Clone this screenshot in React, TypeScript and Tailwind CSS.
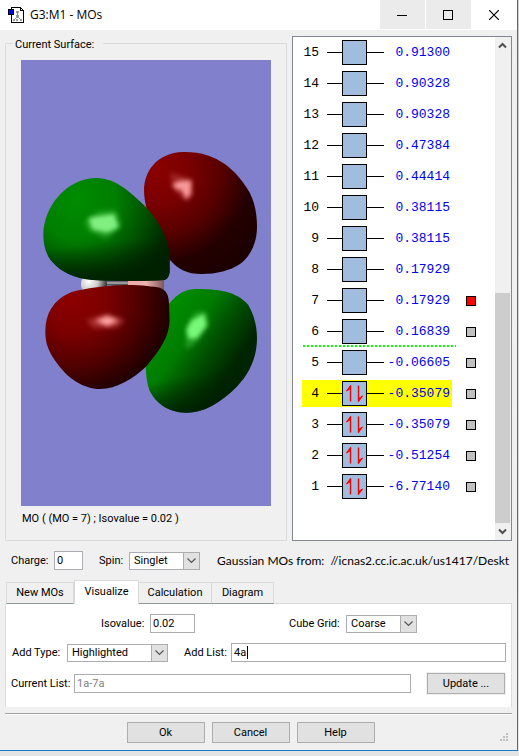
import { useState } from 'react';
import type { ReactNode } from 'react';

type Orbital = {
  id: number;
  energy: string;
  occupied?: boolean;
  selectable?: boolean;
};

const ORBITALS: Orbital[] = [
  { id: 15, energy: '0.91300' },
  { id: 14, energy: '0.90328' },
  { id: 13, energy: '0.90328' },
  { id: 12, energy: '0.47384' },
  { id: 11, energy: '0.44414' },
  { id: 10, energy: '0.38115' },
  { id: 9, energy: '0.38115' },
  { id: 8, energy: '0.17929' },
  { id: 7, energy: '0.17929', selectable: true },
  { id: 6, energy: '0.16839', selectable: true },
  { id: 5, energy: '-0.06605', selectable: true },
  { id: 4, energy: '-0.35079', occupied: true, selectable: true },
  { id: 3, energy: '-0.35079', occupied: true, selectable: true },
  { id: 2, energy: '-0.51254', occupied: true, selectable: true },
  { id: 1, energy: '-6.77140', occupied: true, selectable: true },
];

const TABS = [
  { name: 'New MOs', width: 'w-[68px]' },
  { name: 'Visualize', width: 'w-[65px]' },
  { name: 'Calculation', width: 'w-[73px]' },
  { name: 'Diagram', width: 'w-[62px]' },
];

const inputClass = 'border border-[#abadb3] bg-white px-[2px] outline-none';

function AppIcon() {
  return (
    <svg width="16" height="16" viewBox="0 0 16 16" shapeRendering="crispEdges">
      <path d="M3.5.5h9l3 3v12h-12z" fill="#fff" stroke="#000" />
      <path d="M12.500 .5v3h3" fill="none" stroke="#000" />
      <path d="M9.500 5v5M9 10l-3 3M10 10l3 3" stroke="#888" strokeWidth="1" shapeRendering="auto" />
      <path d="M8 4h3v2H8zM8 8h3v3H8zM5 12h2v2H5zM8 12h2v2H8zM12 12h2v2h-2z" fill="#999" />
      <path d="M.5 2.500h5v5h-5z" fill="#00f" stroke="#000" />
    </svg>
  );
}

function TitleBar() {
  return (
    <header className="flex h-[30px] bg-white">
      <div className="flex flex-1 items-center gap-[6px] pl-2 font-['Open_Sans',sans-serif] text-xs">
        <AppIcon />
        <h1>G3:M1 - MOs</h1>
      </div>
      <div className="flex h-[29px] gap-px">
        <button aria-label="Minimize" className="flex w-[45px] items-center justify-center bg-[#ebebeb] pr-px">
          <svg width="10" height="10" shapeRendering="crispEdges">
            <path d="M0 5.500h10" stroke="#000" />
          </svg>
        </button>
        <button aria-label="Maximize" className="flex w-[45px] items-center justify-center bg-[#ebebeb] pr-px">
          <svg width="10" height="10" shapeRendering="crispEdges">
            <path d="M.5.5h9v9h-9z" fill="none" stroke="#000" />
          </svg>
        </button>
        <button aria-label="Close" className="flex w-[45px] items-center justify-center pr-px">
          <svg width="10" height="10">
            <path d="M0 0l10 10M10 0L0 10" stroke="#000" strokeWidth="1.200" />
          </svg>
        </button>
      </div>
    </header>
  );
}

function SurfaceView() {
  return (
    <svg viewBox="0 0 250 446" className="h-auto w-full bg-[#8080cc]" role="img" aria-label="Molecular orbital surface">
      <defs>
        <radialGradient id="redTop" gradientUnits="userSpaceOnUse" cx="410" cy="90" r="360">
          <stop offset="0" stopColor="#8c0000" />
          <stop offset=".3" stopColor="#780000" />
          <stop offset=".55" stopColor="#560000" />
          <stop offset=".78" stopColor="#240000" />
          <stop offset="1" stopColor="#1c0000" />
        </radialGradient>
        <radialGradient id="greenTop" gradientUnits="userSpaceOnUse" cx="170" cy="180" r="340">
          <stop offset="0" stopColor="#008c00" />
          <stop offset=".35" stopColor="#007e00" />
          <stop offset=".6" stopColor="#005400" />
          <stop offset=".86" stopColor="#002400" />
          <stop offset="1" stopColor="#002000" />
        </radialGradient>
        <linearGradient id="greenFloor" gradientUnits="userSpaceOnUse" x1="240" y1="310" x2="250" y2="410">
          <stop offset="0" stopColor="#002000" stopOpacity="0" />
          <stop offset="1" stopColor="#002000" stopOpacity=".9" />
        </linearGradient>
        <radialGradient id="redLow" gradientUnits="userSpaceOnUse" cx="160" cy="90" r="330">
          <stop offset="0" stopColor="#8c0000" />
          <stop offset=".3" stopColor="#7c0000" />
          <stop offset=".6" stopColor="#500000" />
          <stop offset=".85" stopColor="#240000" />
          <stop offset="1" stopColor="#200000" />
        </radialGradient>
        <linearGradient id="greenLow" gradientUnits="userSpaceOnUse" x1="430" y1="150" x2="640" y2="290">
          <stop offset="0" stopColor="#008c00" />
          <stop offset=".35" stopColor="#007c00" />
          <stop offset=".65" stopColor="#005000" />
          <stop offset="1" stopColor="#002400" />
        </linearGradient>
        <linearGradient id="greenLowFloor" gradientUnits="userSpaceOnUse" x1="480" y1="320" x2="500" y2="420">
          <stop offset="0" stopColor="#002000" stopOpacity="0" />
          <stop offset="1" stopColor="#002000" stopOpacity=".85" />
        </linearGradient>
        <radialGradient id="hydrogen" cx=".3" cy=".4" r=".7">
          <stop offset="0" stopColor="#fff" />
          <stop offset=".5" stopColor="#ccc" />
          <stop offset="1" stopColor="#333" />
        </radialGradient>
        <linearGradient id="boron">
          <stop offset="0" stopColor="#f0a8a8" />
          <stop offset=".5" stopColor="#eeb0b0" />
          <stop offset="1" stopColor="#7c5858" />
        </linearGradient>
        <filter id="soft" x="-40%" y="-40%" width="180%" height="180%">
          <feGaussianBlur stdDeviation="8" />
        </filter>
        <filter id="softer" x="-40%" y="-40%" width="180%" height="180%">
          <feGaussianBlur stdDeviation="7" />
        </filter>
      </defs>

      {/* right-hand lobes */}
      <g transform="translate(-1 80) scale(.33333)">
        <path
          d="M372 150C372 95 410 38 490 36C590 34 650 90 690 160C705 190 711 225 711 260C711 310 690 350 660 372C630 392 590 402 545 402C500 402 475 388 450 360C420 320 372 220 372 150Z"
          fill="url(#redTop)"
        />
        <path d="M450 98L512 116L518 165L500 184L462 150Z" fill="#b84040" opacity=".6" filter="url(#soft)" />
        <path d="M458 132L480 122L514 122L512 162L498 178L486 152L464 144Z" fill="#f89898" filter="url(#softer)" />
      </g>
      <g transform="translate(-1 210) scale(.33333)">
        <path
          d="M430 125C470 65 500 57 530 57C600 57 650 65 685 105C705 140 711 175 711 205C711 260 690 310 650 350C600 400 550 428 500 428C440 428 405 395 388 360C380 335 377 310 378 290Z"
          fill="url(#greenLow)"
        />
        <path
          d="M430 125C470 65 500 57 530 57C600 57 650 65 685 105C705 140 711 175 711 205C711 260 690 310 650 350C600 400 550 428 500 428C440 428 405 395 388 360C380 335 377 310 378 290Z"
          fill="url(#greenLowFloor)"
        />
        <path d="M498 170L525 125L558 125L566 165L530 215L498 240Z" fill="#30b030" opacity=".7" filter="url(#soft)" />
        <path d="M500 178L516 150L552 132L560 166L530 205L506 206Z" fill="#78f878" filter="url(#softer)" />
      </g>

      {/* atoms and bond */}
      <g transform="translate(-1 80) scale(.33333)">
        <rect x="250" y="424" width="80" height="12" fill="#555" />
        <rect x="250" y="427" width="80" height="4" fill="#bbb" />
        <circle cx="222" cy="432" r="39" fill="url(#hydrogen)" />
        <rect x="324" y="410" width="108" height="40" fill="url(#boron)" />
      </g>

      {/* left-hand lobes */}
      <g transform="translate(-1 80) scale(.33333)">
        <path
          d="M70 285C70 200 140 114 230 114C290 114 340 165 380 203C420 248 448 300 449 350L449 395C447 410 443 414 435 420C350 425 290 423 220 420C150 416 110 385 88 355C74 330 70 305 70 285Z"
          fill="url(#greenTop)"
        />
        <path
          d="M70 285C70 200 140 114 230 114C290 114 340 165 380 203C420 248 448 300 449 350L449 395C447 410 443 414 435 420C350 425 290 423 220 420C150 416 110 385 88 355C74 330 70 305 70 285Z"
          fill="url(#greenFloor)"
        />
        <path d="M192 245L235 212L290 210L304 258L260 298L205 272Z" fill="#30b030" opacity=".6" filter="url(#soft)" />
        <path d="M206 234L240 228L282 222L296 262L262 278L216 268Z" fill="#80f080" filter="url(#softer)" />
      </g>
      <g transform="translate(-1 210) scale(.33333)">
        <path
          d="M76 185C76 130 100 90 150 68C190 55 270 45 320 45C370 45 400 50 420 53C440 62 446 75 447 100L449 150C448 200 420 240 378 290C340 325 290 357 240 357C190 357 145 325 115 285C85 245 76 220 76 185Z"
          fill="url(#redLow)"
        />
        <path d="M200 150L260 130L315 150L290 174L220 174Z" fill="#b84040" opacity=".7" filter="url(#soft)" />
        <path d="M226 152L262 138L296 152L262 168Z" fill="#ffa0a0" filter="url(#softer)" />
      </g>
    </svg>
  );
}

function OrbitalRow({
  orbital,
  highlighted,
  checked,
  onToggle,
}: {
  orbital: Orbital;
  highlighted: boolean;
  checked: boolean;
  onToggle: () => void;
}) {
  return (
    <li className="flex h-[31px] items-center">
      <div className={`flex h-[27px] w-[150px] items-center ${highlighted ? 'bg-[#ffff00]' : ''}`}>
        <span className="w-[17px] text-right">{orbital.id}</span>
        <span className="ml-2 h-px w-[15px] bg-black" />
        <span className="flex size-[25px] items-center justify-center border border-black bg-[#a0bddd]">
          {orbital.occupied && (
            <svg width="19" height="19" viewBox="0 0 19 19" stroke="#f00" fill="#f00">
              <path d="M5.500 1.500v16M13.500 1.500v16" strokeWidth="1.400" />
              <path d="M5.500 1.500v3L1.500 7zM13.500 17.500v-3L17.500 12z" />
            </svg>
          )}
        </span>
        <span className="h-px w-[17px] bg-black" />
        <span className="flex-1 pr-[2px] text-right text-[#0000f0]">{orbital.energy}</span>
      </div>
      {orbital.selectable && (
        <input
          type="checkbox"
          aria-label={`Surface for MO ${orbital.id}`}
          checked={checked}
          onChange={onToggle}
          className="ml-[14px] size-[10px] appearance-none border border-black bg-[#c0c0c0] checked:bg-[#ff0000]"
        />
      )}
    </li>
  );
}

function ScrollBar() {
  return (
    <div className="flex w-[16px] flex-col bg-[#f0f0f0] pr-px">
      <button aria-label="Scroll up" className="flex h-[17px] items-center justify-center">
        <svg width="9" height="7" fill="none" stroke="#505050" strokeWidth="2">
          <path d="M1 5.500l3.500-3.500L8 5.500" />
        </svg>
      </button>
      <div className="flex flex-1 flex-col justify-end">
        <div className="h-[49%] bg-[#cdcdcd]" />
      </div>
      <button aria-label="Scroll down" className="flex h-[17px] items-center justify-center">
        <svg width="9" height="7" fill="none" stroke="#505050" strokeWidth="2">
          <path d="M1 1.500l3.500 3.500L8 1.500" />
        </svg>
      </button>
    </div>
  );
}

function OrbitalList() {
  const [shown, setShown] = useState<number[]>([7]);

  const toggle = (id: number) => {
    setShown((prev) => (prev.includes(id) ? prev.filter((n) => n !== id) : [...prev, id]));
  };

  return (
    <section className="flex w-[220px] shrink-0 border border-[#828790] bg-white">
      <div className="relative flex-1 pl-[9px] font-['Liberation_Mono',monospace] text-[13px] leading-4">
        <ul>
          {ORBITALS.map((orbital) => (
            <OrbitalRow
              key={orbital.id}
              orbital={orbital}
              highlighted={orbital.id === 4}
              checked={shown.includes(orbital.id)}
              onToggle={() => toggle(orbital.id)}
            />
          ))}
        </ul>
        {/* HOMO / LUMO divider */}
        <div className="absolute top-[308px] left-[10px] h-[2px] w-[153px] bg-[repeating-linear-gradient(90deg,#00ff00_0_2px,transparent_2px_4px)]" />
      </div>
      <ScrollBar />
    </section>
  );
}

function Select({ id, options, className }: { id: string; options: string[]; className: string }) {
  return (
    <div className={`relative h-[18px] ${className}`}>
      <select id={id} className="block h-full w-full appearance-none border border-[#abadb3] bg-white pr-4 pl-1 outline-none">
        {options.map((option) => (
          <option key={option}>{option}</option>
        ))}
      </select>
      <span className="pointer-events-none absolute inset-y-0 right-0 flex w-[17px] items-center justify-center border border-[#adadad] bg-[#e1e1e1]">
        <svg width="9" height="6" fill="none" stroke="#555">
          <path d="M.5.5l4 4 4-4" strokeWidth="1.200" />
        </svg>
      </span>
    </div>
  );
}

function PushButton({ children }: { children: ReactNode }) {
  return (
    <button className="h-[21px] w-[78px] border border-[#adadad] bg-[#e1e1e1]">{children}</button>
  );
}

function Tabs({ active, onSelect }: { active: string; onSelect: (tab: string) => void }) {
  return (
    <div role="tablist" className="flex items-end pl-px">
      {TABS.map(({ name, width }) => (
        <button
          key={name}
          role="tab"
          aria-selected={name === active}
          onClick={() => onSelect(name)}
          className={`${width} ${
            name === active
              ? 'h-6 border border-b-0 border-[#d9d9d9] bg-white pb-[2px]'
              : 'h-[22px] border border-l-0 border-[#d9d9d9] border-b-[#8e9999] first:border-l'
          }`}
        >
          {name}
        </button>
      ))}
      <div className="flex-1 border-b border-[#d9d9d9]" />
    </div>
  );
}

function VisualizePanel() {
  return (
    <div className="flex flex-col gap-[10px] border-x border-[#dcdcdc] bg-white pt-[10px] pr-[5px] pb-[12px] pl-[5px]">
      <div className="flex items-center pl-[90px]">
        <label htmlFor="isovalue" className="w-[49px]">Isovalue:</label>
        <input id="isovalue" defaultValue="0.02" className={`${inputClass} h-[19px] w-[45px]`} />
        <label htmlFor="grid" className="ml-[94px] w-[57px]">Cube Grid:</label>
        <Select id="grid" options={['Coarse', 'Medium', 'Fine']} className="w-[71px]" />
      </div>
      <div className="flex items-center">
        <label htmlFor="add-type" className="w-[56px] pl-px">Add Type:</label>
        <Select id="add-type" options={['Highlighted', 'HOMO', 'LUMO']} className="w-[101px]" />
        <label htmlFor="add-list" className="ml-4 w-[47px]">Add List:</label>
        <div className={`${inputClass} relative h-[19px] flex-1`}>
          <input id="add-list" defaultValue="4a" className="block h-full w-full outline-none" />
          <span className="absolute top-[2px] left-[15px] h-[13px] w-px bg-black" />
        </div>
      </div>
      <div className="flex items-center">
        <label htmlFor="current-list" className="w-[63px]">Current List:</label>
        <input
          id="current-list"
          readOnly
          value="1a-7a"
          className={`${inputClass} mr-[15px] h-[19px] min-w-0 flex-1 text-[#808080]`}
        />
        <div className="border border-[#f0f0f0]">
          <PushButton>Update ...</PushButton>
        </div>
      </div>
    </div>
  );
}

export default function App() {
  const [tab, setTab] = useState('Visualize');

  return (
    <div className="min-h-screen bg-[linear-gradient(#c8c8c8,#e4e4e4)] pr-px pb-[5px] font-['Roboto',sans-serif] text-[11px] leading-4 text-black">
      <div className="border-r border-b border-[#1a7bcb] bg-[#f0f0f0]">
        <TitleBar />
        <main className="px-[5px]">
          <div className="flex gap-[5px] pt-[6px]">
            <fieldset className="min-w-0 flex-1 border border-[#dcdcdc] px-[15px]">
              <legend className="-ml-[8px] h-[14px] pr-[9px] pl-[2px] leading-[18px]">Current Surface:</legend>
              <div className="pt-[10px] pb-[13px]">
                <SurfaceView />
                <p className="pt-[5px] pl-px">MO ( (MO = 7) ; Isovalue = 0.02 )</p>
              </div>
            </fieldset>
            <OrbitalList />
          </div>

          <div className="flex h-[39px] items-center pl-[6px]">
            <label htmlFor="charge" className="w-[43px]">Charge:</label>
            <input id="charge" defaultValue="0" className={`${inputClass} h-[19px] w-[29px]`} />
            <label htmlFor="spin" className="ml-4 w-[30px]">Spin:</label>
            <Select id="spin" options={['Singlet', 'Triplet']} className="w-[71px]" />
            <p className="ml-[17px] min-w-0 flex-1 overflow-hidden font-['Lato',sans-serif] text-xs whitespace-pre">
              {'Gaussian MOs from:  //icnas2.cc.ic.ac.uk/us1417/Deskt'}
            </p>
          </div>

          <Tabs active={tab} onSelect={setTab} />
          <VisualizePanel />

          <footer className="mt-[6px] flex border-t border-[#a0a0a0] shadow-[inset_0_1px_0_#fff]">
            <div className="flex flex-1 justify-center gap-[7px] pt-2 pr-4 pb-[7px]">
              <PushButton>Ok</PushButton>
              <PushButton>Cancel</PushButton>
              <PushButton>Help</PushButton>
            </div>
            <svg width="9" height="9" fill="#bfbfbf" className="-ml-3 mr-[3px] mb-2 self-end">
              <path d="M6 0h2v2H6zM3 3h2v2H3zM6 3h2v2H6zM0 6h2v2H0zM3 6h2v2H3zM6 6h2v2H6z" />
            </svg>
          </footer>
        </main>
      </div>
    </div>
  );
}
